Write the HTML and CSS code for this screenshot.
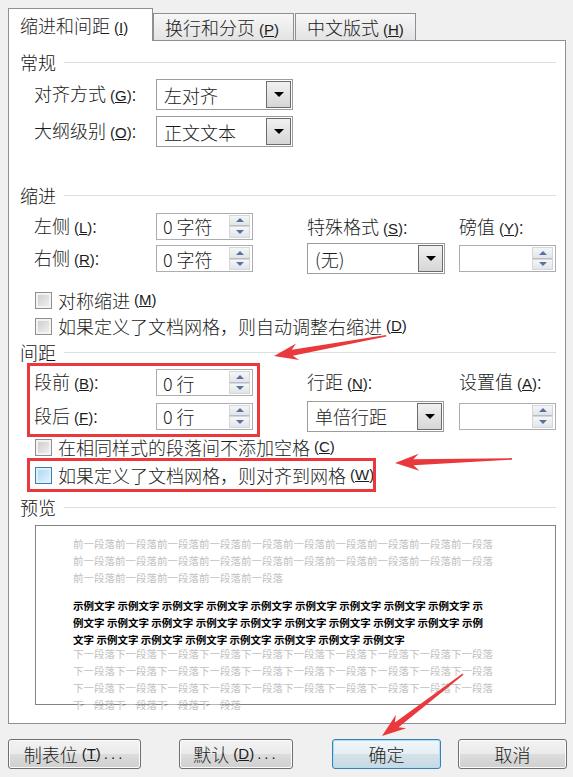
FILE: index.html
```html
<!DOCTYPE html>
<html lang="zh-CN">
<head>
<meta charset="utf-8">
<title>段落</title>
<link rel="stylesheet" href="styles.css">
</head>
<body>
<div class="dialog">
  <div class="tabs">
    <div class="tab active">缩进和间距<span class="mn">(<u>I</u>)</span></div>
    <div class="tab t2">换行和分页<span class="mn">(<u>P</u>)</span></div>
    <div class="tab t3">中文版式<span class="mn">(<u>H</u>)</span></div>
  </div>
  <div class="panel">
    <div class="head">常规</div>
    <div class="grid g1">
      <div class="lbl">对齐方式<span class="mn">(<u>G</u>)</span>:</div>
      <div class="combo"><span class="txt">左对齐</span><span class="dd"></span></div>
      <div></div><div></div>
      <div class="lbl">大纲级别<span class="mn">(<u>O</u>)</span>:</div>
      <div class="combo"><span class="txt">正文文本</span><span class="dd"></span></div>
      <div></div><div></div>
    </div>

    <div class="head h2">缩进</div>
    <div class="grid g2">
      <div class="lbl">左侧<span class="mn">(<u>L</u>)</span>:</div>
      <div class="spin"><span class="txt">0 字符</span><span class="arrows"><span class="up"></span><span class="down"></span></span></div>
      <div class="lbl end">特殊格式<span class="mn">(<u>S</u>)</span>:</div>
      <div class="lbl end">磅值<span class="mn">(<u>Y</u>)</span>:</div>
      <div class="lbl">右侧<span class="mn">(<u>R</u>)</span>:</div>
      <div class="spin"><span class="txt">0 字符</span><span class="arrows"><span class="up"></span><span class="down"></span></span></div>
      <div class="combo wide"><span class="txt">(无)</span><span class="dd"></span></div>
      <div class="spin"><span class="txt"></span><span class="arrows"><span class="up"></span><span class="down"></span></span></div>
    </div>

    <div class="cbrow r1"><span class="cb"></span>对称缩进<span class="mn">(<u>M</u>)</span></div>
    <div class="cbrow r2"><span class="cb"></span>如果定义了文档网格，则自动调整右缩进<span class="mn">(<u>D</u>)</span></div>

    <div class="head h3">间距</div>
    <div class="grid g3">
      <div class="lbl">段前<span class="mn">(<u>B</u>)</span>:</div>
      <div class="spin"><span class="txt">0 行</span><span class="arrows"><span class="up"></span><span class="down"></span></span></div>
      <div class="lbl">行距<span class="mn">(<u>N</u>)</span>:</div>
      <div class="lbl">设置值<span class="mn">(<u>A</u>)</span>:</div>
      <div class="lbl">段后<span class="mn">(<u>F</u>)</span>:</div>
      <div class="spin"><span class="txt">0 行</span><span class="arrows"><span class="up"></span><span class="down"></span></span></div>
      <div class="combo"><span class="txt">单倍行距</span><span class="dd"></span></div>
      <div class="spin"><span class="txt"></span><span class="arrows"><span class="up"></span><span class="down"></span></span></div>
    </div>

    <div class="cbrow r3"><span class="cb"></span>在相同样式的段落间不添加空格<span class="mn">(<u>C</u>)</span></div>
    <div class="cbrow r4"><span class="cb hot"></span>如果定义了文档网格，则对齐到网格<span class="mn">(<u>W</u>)</span></div>

    <div class="head h4">预览</div>
    <div class="preview">
      <div class="prev">前一段落前一段落前一段落前一段落前一段落前一段落前一段落前一段落前一段落前一段落<br>前一段落前一段落前一段落前一段落前一段落前一段落前一段落前一段落前一段落前一段落<br>前一段落前一段落前一段落前一段落前一段落</div>
      <div class="sample">示例文字 示例文字 示例文字 示例文字 示例文字 示例文字 示例文字 示例文字 示例文字 示<br>例文字 示例文字 示例文字 示例文字 示例文字 示例文字 示例文字 示例文字 示例文字 示例<br>文字 示例文字 示例文字 示例文字 示例文字 示例文字 示例文字 示例文字</div>
      <div class="next">下一段落下一段落下一段落下一段落下一段落下一段落下一段落下一段落下一段落下一段落<br>下一段落下一段落下一段落下一段落下一段落下一段落下一段落下一段落下一段落下一段落<br>下一段落下一段落下一段落下一段落下一段落下一段落下一段落下一段落下一段落下一段落<br>下一段落下一段落下一段落下一段落</div>
    </div>
  </div>
  <div class="buttons">
    <div class="btn b1">制表位<span class="mn">(<u>T</u>)</span><span class="dots">...</span></div>
    <div class="btn b2">默认<span class="mn">(<u>D</u>)</span><span class="dots">...</span></div>
    <div class="btn b3">确定</div>
    <div class="btn b4">取消</div>
  </div>
</div>

<svg class="anno" width="573" height="777" viewBox="0 0 573 777">
  <rect x="28.5" y="364.5" width="230" height="71" fill="none" stroke="#e9393d" stroke-width="3"/>
  <rect x="28.5" y="459.5" width="346" height="31" fill="none" stroke="#e9393d" stroke-width="3"/>
  <g fill="#e9393d">
    <polygon transform="translate(274,356) rotate(-10.2)" points="0,0 24,-8.5 18.5,-3 114,-0.8 114,0.8 18.5,3 24,8.5"/>
    <polygon transform="translate(395,463) rotate(-2)" points="0,0 24,-8.5 18.5,-3 117,-0.8 117,0.8 18.5,3 24,8.5"/>
    <polygon transform="translate(382,736) rotate(-37.4)" points="0,0 24,-8.5 18.5,-3 102,-0.8 102,0.8 18.5,3 24,8.5"/>
  </g>
</svg>
</body>
</html>
```
FILE: styles.css
```css
html, body {
  margin: 0;
  padding: 0;
}
body {
  position: relative;
  width: 573px;
  height: 777px;
  overflow: hidden;
  background: #f0f0f0;
  font-family: "Noto Sans CJK SC", "Noto Sans", sans-serif;
  font-size: 18px;
  font-weight: 300;
  color: #1b1b1b;
}
.mn {
  font-family: "Liberation Sans", "DejaVu Sans", sans-serif;
  font-size: 15px;
  font-weight: 400;
  margin-left: 4px;
}
.mn u {
  text-decoration-thickness: 1px;
  text-underline-offset: 1px;
}
.dialog {
  padding: 8px 0 0 8px;
}
.tabs {
  display: flex;
  align-items: flex-end;
  height: 32px;
}
.tab {
  box-sizing: border-box;
  height: 27px;
  border: 1px solid #8e9096;
  border-bottom: none;
  background: linear-gradient(#f7f7f7, #e3e3e3);
  padding-left: 11px;
  line-height: 26px;
  white-space: nowrap;
}
.tab.active {
  width: 145px;
  height: 33px;
  line-height: 32px;
  background: #fff;
  margin-bottom: -1px;
  position: relative;
  z-index: 1;
}
.tab.t2 {
  width: 141px;
}
.tab.t3 {
  width: 121px;
  margin-left: 1px;
}
.panel {
  box-sizing: border-box;
  width: 558px;
  height: 684px;
  border: 1px solid #8e9096;
  background: #fff;
  padding: 9px 9px 0 11px;
}
.head {
  display: flex;
  align-items: center;
  gap: 8px;
  height: 24px;
  line-height: 24px;
  color: #111;
}
.head::after {
  content: "";
  flex: 1;
  height: 1px;
  background: #d9e1e7;
}
.h2 { margin-top: 36px; }
.h3 { margin-top: 2px; }
.h4 { margin-top: 8px; }

.grid {
  display: grid;
  grid-template-columns: 122px 151px 152px 97px;
  margin-left: 14px;
  align-items: center;
}
.g1 {
  grid-template-rows: 31px 31px;
  row-gap: 6px;
  margin-top: 5px;
}
.g2 {
  grid-template-rows: 30px 31px;
  row-gap: 2px;
  margin-top: 4px;
}
.g3 {
  grid-template-rows: 31px 32px;
  row-gap: 2px;
  margin-top: 3px;
}
.lbl {
  line-height: 24px;
  white-space: nowrap;
}
.lbl.end {
  align-self: end;
}

.combo {
  box-sizing: border-box;
  width: 137px;
  height: 31px;
  border: 1px solid #9c9c9c;
  background: #fff;
  display: flex;
  align-items: center;
}
.combo.wide {
  width: 138px;
}
.combo .txt {
  flex: 1;
  padding-left: 7px;
  line-height: 24px;
  white-space: nowrap;
}
.dd {
  box-sizing: border-box;
  width: 25px;
  height: 27px;
  margin-right: 1px;
  border: 1px solid #6c6c6c;
  background: linear-gradient(#f1f1f1, #d6d6d6);
  display: flex;
  align-items: center;
  justify-content: center;
}
.dd::before {
  content: "";
  border-left: 5px solid transparent;
  border-right: 5px solid transparent;
  border-top: 5px solid #000;
}

.spin {
  box-sizing: border-box;
  width: 97px;
  height: 27px;
  border: 1px solid #abadb3;
  background: #fff;
  display: flex;
  align-items: center;
}
.spin .txt {
  flex: 1;
  padding-left: 6px;
  line-height: 24px;
  white-space: nowrap;
}
.arrows {
  width: 21px;
  height: 23px;
  margin-right: 2px;
  display: flex;
  flex-direction: column;
}
.arrows span {
  flex: 1;
  box-sizing: border-box;
  border: 1px solid #d3d6db;
  background: linear-gradient(#f6f6f6, #e2e4e7);
  display: flex;
  align-items: center;
  justify-content: center;
}
.arrows .up {
  border-bottom-color: #b9bcc2;
}
.arrows .up::before {
  content: "";
  border-left: 4px solid transparent;
  border-right: 4px solid transparent;
  border-bottom: 4px solid #5572a6;
}
.arrows .down::before {
  content: "";
  border-left: 4px solid transparent;
  border-right: 4px solid transparent;
  border-top: 4px solid #5572a6;
}

.cbrow {
  display: flex;
  align-items: center;
  height: 24px;
  line-height: 24px;
  margin-left: 15px;
  white-space: nowrap;
}
.r1 { margin-top: 14px; }
.r2 { margin-top: 2px; }
.r3 { margin-top: 3px; }
.r4 { margin-top: 4px; }
.cb {
  box-sizing: border-box;
  width: 17px;
  height: 17px;
  border: 1px solid #8f8f8f;
  background: linear-gradient(135deg, #c9c9c9, #f4f4f4);
  box-shadow: inset 0 0 0 2px #f3f3f3;
  margin-right: 6px;
  flex: none;
}
.cb.hot {
  border-color: #3c7fb1;
  background: linear-gradient(135deg, #a6d6f2, #e6f5fd);
  box-shadow: inset 0 0 0 2px #def1fb;
}

.preview {
  box-sizing: border-box;
  height: 180px;
  margin: 6px 0 0 15px;
  border: 1px solid #838383;
  background: #fff;
  padding: 9px 0 0 37px;
  font-size: 10.5px;
  font-weight: 400;
  line-height: 17px;
  white-space: nowrap;
}
.prev, .next {
  color: #c2c2c2;
}
.sample {
  color: #000;
  font-weight: bold;
  margin-top: 11px;
}
.next {
  margin-top: -3px;
}

.buttons {
  display: flex;
  margin-top: 15px;
  height: 30px;
}
.btn {
  box-sizing: border-box;
  height: 30px;
  border: 1px solid #707070;
  border-radius: 3px;
  background: linear-gradient(#f2f2f2 0%, #ebebeb 50%, #dddddd 50%, #cfcfcf 100%);
  box-shadow: inset 0 0 0 1px #fbfbfb;
  display: flex;
  align-items: center;
  justify-content: center;
  line-height: 24px;
  white-space: nowrap;
}
.dots {
  font-family: "Liberation Sans", sans-serif;
  font-size: 15px;
  font-weight: 400;
  letter-spacing: 3px;
  margin-left: 3px;
}
.b1 { width: 133px; }
.b2 { width: 114px; margin-left: 38px; }
.b3 {
  width: 109px;
  margin-left: 39px;
  border-color: #3c7fb1;
  box-shadow: inset 0 0 0 1px #a9e2f8;
  background: linear-gradient(#f0f6f9 0%, #e6eff4 50%, #d5e2ea 50%, #c8d9e3 100%);
}
.b4 { width: 109px; margin-left: 17px; }

.anno {
  position: absolute;
  left: 0;
  top: 0;
  pointer-events: none;
}
```
